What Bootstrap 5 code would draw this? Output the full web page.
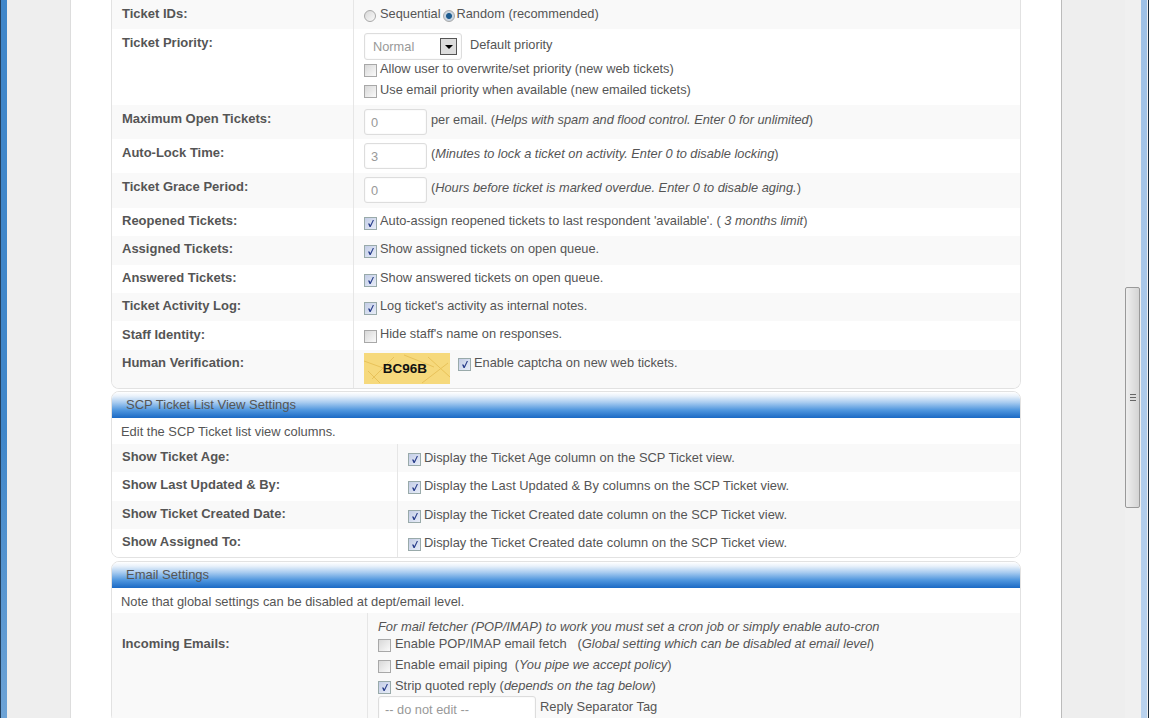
<!DOCTYPE html>
<html lang="en">
<head>
<meta charset="utf-8">
<title>Settings</title>
<link href="https://cdn.jsdelivr.net/npm/bootstrap@5.3.0/dist/css/bootstrap.min.css" rel="stylesheet">
<style>
html,body{height:718px;overflow:hidden;margin:0}
body{font-family:"Liberation Sans",Arial,sans-serif;font-size:12.8px;line-height:14px;color:#555;background:#eee}
.win{height:718px;border-left:1px solid #22405f;border-right:1px solid #1c2c3c}
.frame-l{width:6px;background:linear-gradient(#3f86c9 0,#3f86c9 60%,#6da3d6 100%)}
.frame-r{width:6px;background:linear-gradient(#9dc0e6,#b9d2ee)}
.gutter-l{width:64px;border-right:1px solid #ddd;background:#eee}
.gutter-r{width:64px;border-left:1px solid #bbb;background:#eee}
.sheet{width:990px;background:#fff;padding:0 40px;height:718px;overflow:hidden}
.sbar{width:16px;background:#f0f0f0}
.sthumb{margin:287px 1px 0 0;height:221px;border:1px solid #999;border-radius:2px;background:linear-gradient(90deg,#eee,#d4d4d4);display:flex;align-items:center;justify-content:center}
.grip{width:6px;height:7px;background:repeating-linear-gradient(#666 0 1px,#ddd 1px 3px)}
.pane{border:1px solid #e2e2e2;border-top:0;border-radius:0 0 8px 8px;overflow:hidden;margin-bottom:2px;--bs-card-bg:#fff}
.pane-b{border-top:1px solid #e2e2e2;border-radius:8px;margin-bottom:3px;font-size:12.9px}
.pane-head{height:26px;padding:6px 14px 0;line-height:14px;border:0;border-radius:0;color:#555;background:linear-gradient(#fff 0,#eaf2fb 15%,#a9ccf0 40%,#4f96de 70%,#1a69c4 100%);font-size:13px}
.pane-note{height:26px;padding:7px 9px 0}
.pane-note-s{height:25px}
.tr-a{background:#f9f9f9}
.tr-b{background:#fff}
.lab{flex:none;width:242px;padding:6px 10px 0;font-weight:700;font-size:13px;border-right:1px solid #e6e6e6}
.lab-tall{padding-top:7px}
.lab-2{width:286px}
.lab-3{width:256px;padding-top:24px}
.val{padding:6px 10px 0;flex:1}
.val-3{padding-top:7px}
.val-top{padding-top:3px}
.val-2{padding-top:7px}
.val-2 .box{margin-top:2px}
.val-3 .box{margin-right:4px}
.h29{height:29px}.h28{height:28px}.h34{height:34px}.h35{height:35px}.h76{height:76px}.h38{height:38px}
.opt{display:flex;align-items:center;height:21px}
.opt .box{margin-top:4px}
.box,.rad{appearance:none;-webkit-appearance:none;flex:none;display:inline-block;width:13px;height:13px;margin:3px 3px 0 0;border:1px solid #a8a8a8;background:linear-gradient(135deg,#d8d8d8,#fafafa);position:relative}
.rad{border-radius:50%;width:12px;height:12px;margin:3px 4px 0 0}
.rad-on{margin:3px 1px 0 3px}
.box:checked{background:linear-gradient(135deg,#c3cde6,#e8edf8);border-color:#9aa}
.box:checked::after{content:"";position:absolute;left:3px;top:2px;width:6px;height:7px;background:#2b3f8c;clip-path:polygon(0 50%,25% 50%,40% 72%,80% 0,100% 0,45% 100%,25% 100%)}
.rad:checked{background:radial-gradient(circle,#1c5b8f 0 2.5px,#c8d4e0 3.5px)}
.fld{display:block;height:26px;border:1px solid #ddd;border-radius:3px;box-shadow:inset 0 0 2px #eee;background:#fff;color:#999;padding:5px 6px;line-height:14px;font-size:12.8px}
input.fld{outline:0}
.w63{width:63px}.w158{width:158px}
.pick{width:98px;height:27px;padding:6px 8px;position:relative;margin-bottom:-2px}
.pick-btn{position:absolute;right:4px;top:4px;width:17px;height:17px;border:1px solid #555;background:#ddd}
.pick-btn::after{content:"";position:absolute;left:4px;top:6px;border:4px solid transparent;border-top:4px solid #000;border-bottom:0}
.pick-note{padding-top:5px}
.side-txt{padding-top:4px}
.capt{flex:none;width:86px;height:31px;background:#f6d97c;position:relative;color:#111;font-weight:700;font-size:13.5px;display:flex;align-items:center;justify-content:center;padding-right:4px}
.capt svg{position:absolute;inset:0}
.capt span{position:relative}
.capt-box{margin:5px 3px 0 8px}
.capt-txt{padding-top:3px}
.fetch-note{height:13px}
</style>
</head>
<body>
<div class="win d-flex">
  <div class="frame-l"></div>
  <div class="gutter-l"></div>
  <div class="sheet">
    <div class="card pane">
      <div class="d-flex tr-a h29"><div class="lab lab-tall">Ticket IDs:</div><div class="val val-2 d-flex align-items-start">
        <input class="rad" type="radio" name="tid"><span>Sequential</span><input class="rad rad-on" type="radio" name="tid" checked><span>Random (recommended)</span>
      </div></div>
      <div class="d-flex tr-b h76"><div class="lab lab-tall">Ticket Priority:</div><div class="val pt-1">
        <div class="d-flex"><div class="fld pick">Normal<span class="pick-btn"></span></div><span class="ms-2 pick-note">Default priority</span></div>
        <div class="opt"><input class="box" type="checkbox"><span>Allow user to overwrite/set priority (new web tickets)</span></div>
        <div class="opt"><input class="box" type="checkbox"><span>Use email priority when available (new emailed tickets)</span></div>
      </div></div>
      <div class="d-flex tr-a h34"><div class="lab lab-tall">Maximum Open Tickets:</div><div class="val pt-1 d-flex"><input class="fld w63" value="0"><span class="ms-1 side-txt">per email. (<em>Helps with spam and flood control. Enter 0 for unlimited</em>)</span></div></div>
      <div class="d-flex tr-b h34"><div class="lab lab-tall">Auto-Lock Time:</div><div class="val pt-1 d-flex"><input class="fld w63" value="3"><span class="ms-1 side-txt">(<em>Minutes to lock a ticket on activity. Enter 0 to disable locking</em>)</span></div></div>
      <div class="d-flex tr-a h35"><div class="lab lab-tall">Ticket Grace Period:</div><div class="val pt-1 d-flex"><input class="fld w63" value="0"><span class="ms-1 side-txt">(<em>Hours before ticket is marked overdue. Enter 0 to disable aging.</em>)</span></div></div>
      <div class="d-flex tr-b h28"><div class="lab">Reopened Tickets:</div><div class="val d-flex"><input class="box" type="checkbox" checked><span>Auto-assign reopened tickets to last respondent 'available'. ( <em>3 months limit</em>)</span></div></div>
      <div class="d-flex tr-a h29"><div class="lab">Assigned Tickets:</div><div class="val d-flex"><input class="box" type="checkbox" checked><span>Show assigned tickets on open queue.</span></div></div>
      <div class="d-flex tr-b h28"><div class="lab">Answered Tickets:</div><div class="val d-flex"><input class="box" type="checkbox" checked><span>Show answered tickets on open queue.</span></div></div>
      <div class="d-flex tr-a h28"><div class="lab">Ticket Activity Log:</div><div class="val d-flex"><input class="box" type="checkbox" checked><span>Log ticket's activity as internal notes.</span></div></div>
      <div class="d-flex tr-b h29"><div class="lab lab-tall">Staff Identity:</div><div class="val d-flex"><input class="box" type="checkbox"><span>Hide staff's name on responses.</span></div></div>
      <div class="d-flex tr-a h38"><div class="lab">Human Verification:</div><div class="val val-top d-flex align-items-start">
        <div class="capt"><svg width="86" height="31" viewBox="0 0 86 31"><path d="M0 8L22 16M8 26L30 4M40 2L70 14M58 30L84 10M64 4L86 24M4 18L16 30" stroke="#e8c25a" fill="none"/></svg><span>BC96B</span></div>
        <input class="box capt-box" type="checkbox" checked><span class="capt-txt">Enable captcha on new web tickets.</span>
      </div></div>
    </div>

    <div class="card pane pane-b">
      <div class="card-header pane-head">SCP Ticket List View Settings</div>
      <div class="pane-note">Edit the SCP Ticket list view columns.</div>
      <div class="d-flex tr-a h28"><div class="lab lab-2">Show Ticket Age:</div><div class="val val-2 d-flex"><input class="box" type="checkbox" checked><span>Display the Ticket Age column on the SCP Ticket view.</span></div></div>
      <div class="d-flex tr-b h29"><div class="lab lab-2">Show Last Updated &amp; By:</div><div class="val val-2 d-flex"><input class="box" type="checkbox" checked><span>Display the Last Updated &amp; By columns on the SCP Ticket view.</span></div></div>
      <div class="d-flex tr-a h28"><div class="lab lab-2">Show Ticket Created Date:</div><div class="val val-2 d-flex"><input class="box" type="checkbox" checked><span>Display the Ticket Created date column on the SCP Ticket view.</span></div></div>
      <div class="d-flex tr-b h28"><div class="lab lab-2">Show Assigned To:</div><div class="val val-2 d-flex"><input class="box" type="checkbox" checked><span>Display the Ticket Created date column on the SCP Ticket view.</span></div></div>
    </div>

    <div class="card pane pane-b">
      <div class="card-header pane-head">Email Settings</div>
      <div class="pane-note pane-note-s">Note that global settings can be disabled at dept/email level.</div>
      <div class="d-flex tr-a"><div class="lab lab-3">Incoming Emails:</div><div class="val val-3">
        <div class="fetch-note"><em>For mail fetcher (POP/IMAP) to work you must set a cron job or simply enable auto-cron</em></div>
        <div class="opt"><input class="box" type="checkbox"><span>Enable POP/IMAP email fetch &nbsp; (<em>Global setting which can be disabled at email level</em>)</span></div>
        <div class="opt"><input class="box" type="checkbox"><span>Enable email piping &nbsp;(<em>You pipe we accept policy</em>)</span></div>
        <div class="opt"><input class="box" type="checkbox" checked><span>Strip quoted reply (<em>depends on the tag below</em>)</span></div>
        <div class="d-flex"><input class="fld w158" value="-- do not edit --"><span class="ms-1 side-txt">Reply Separator Tag</span></div>
      </div></div>
    </div>
  </div>
  <div class="gutter-r"></div>
  <div class="sbar"><div class="sthumb"><div class="grip"></div></div></div>
  <div class="frame-r"></div>
</div>
<script src="https://cdn.jsdelivr.net/npm/bootstrap@5.3.0/dist/js/bootstrap.bundle.min.js"></script>
</body>
</html>
